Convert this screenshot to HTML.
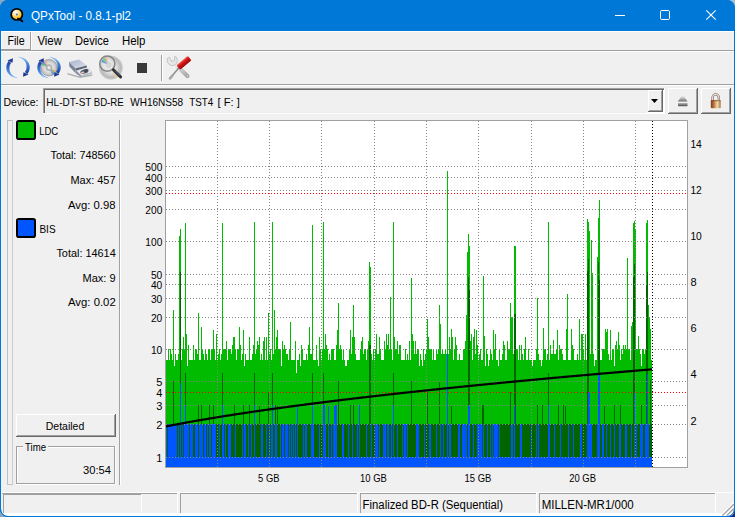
<!DOCTYPE html>
<html><head><meta charset="utf-8"><title>QPxTool - 0.8.1-pl2</title>
<style>html,body{margin:0;padding:0;background:#9DB8D2;overflow:hidden}svg{display:block}</style></head>
<body>
<svg width="735" height="517" viewBox="0 0 735 517" font-family='"Liberation Sans", sans-serif' shape-rendering="crispEdges">
<defs>
<linearGradient id="gArr" gradientUnits="userSpaceOnUse" x1="0" y1="-6" x2="0" y2="11"><stop offset="0" stop-color="#1F3F9E"/><stop offset="0.3" stop-color="#2E62C4"/><stop offset="0.65" stop-color="#4E90E2"/><stop offset="1" stop-color="#9CCCF6"/></linearGradient>
<linearGradient id="gArrow" x1="0" y1="0" x2="0" y2="1"><stop offset="0" stop-color="#9CC8F0"/><stop offset="1" stop-color="#1A3C9C"/></linearGradient>
<linearGradient id="gArrow2" x1="0" y1="1" x2="0" y2="0"><stop offset="0" stop-color="#A8D0F4"/><stop offset="1" stop-color="#1E44A4"/></linearGradient>
<radialGradient id="gDisc" cx="0.5" cy="0.5" r="0.5"><stop offset="0" stop-color="#F4F4F4"/><stop offset="0.5" stop-color="#E2E2E2"/><stop offset="0.85" stop-color="#C4C4C4"/><stop offset="1" stop-color="#ACACAC"/></radialGradient>
<radialGradient id="gGold" cx="0.36" cy="0.28" r="0.75"><stop offset="0" stop-color="#FFFFFF"/><stop offset="0.3" stop-color="#FFE6B8"/><stop offset="0.75" stop-color="#FFC420"/><stop offset="1" stop-color="#F0A000"/></radialGradient>
<linearGradient id="gDrive" x1="0" y1="0" x2="1" y2="1"><stop offset="0" stop-color="#C8CCD4"/><stop offset="1" stop-color="#70747C"/></linearGradient>
<linearGradient id="gRed" x1="0" y1="0" x2="0" y2="1"><stop offset="0" stop-color="#F26060"/><stop offset="0.35" stop-color="#D81818"/><stop offset="1" stop-color="#980808"/></linearGradient>
<linearGradient id="gDrvTop" x1="0" y1="0" x2="1" y2="1"><stop offset="0" stop-color="#A8B4CC"/><stop offset="1" stop-color="#DCE0EA"/></linearGradient>
<radialGradient id="gDisc2" cx="0.5" cy="0.5" r="0.5"><stop offset="0" stop-color="#FAFAFA"/><stop offset="0.5" stop-color="#DEDEDE"/><stop offset="0.85" stop-color="#B8B8B8"/><stop offset="1" stop-color="#D4D4D4"/></radialGradient>
<radialGradient id="gLens" cx="0.55" cy="0.6" r="0.6"><stop offset="0" stop-color="#F4F4F4"/><stop offset="0.6" stop-color="#E0E0E2"/><stop offset="1" stop-color="#C4C4C8"/></radialGradient>
<linearGradient id="gSteel" x1="0" y1="0" x2="1" y2="1"><stop offset="0" stop-color="#F2F2F2"/><stop offset="1" stop-color="#A4A4A4"/></linearGradient>
<linearGradient id="gLock" x1="0" y1="0" x2="1" y2="0"><stop offset="0" stop-color="#80381A"/><stop offset="0.28" stop-color="#B46C3A"/><stop offset="0.66" stop-color="#F0DCAC"/><stop offset="1" stop-color="#A87444"/></linearGradient>
<linearGradient id="gEj" x1="0" y1="0" x2="0" y2="1"><stop offset="0" stop-color="#FFFFFF"/><stop offset="0.45" stop-color="#C8C8C8"/><stop offset="1" stop-color="#6C6C6C"/></linearGradient>
<linearGradient id="gEj2" x1="0" y1="0" x2="0" y2="1"><stop offset="0" stop-color="#B8B8B8"/><stop offset="1" stop-color="#484848"/></linearGradient>
<clipPath id="client"><path d="M1 31H734V509Q734 516 727 516H8Q1 516 1 509Z"/></clipPath>
<clipPath id="win"><rect x="0" y="0" width="735" height="517" rx="8" ry="8"/></clipPath>
</defs>
<rect x="0" y="0" width="735" height="517" fill="#9DB8D2"/>
<rect x="0" y="0" width="12" height="12" fill="#86A9C6"/>
<rect x="723" y="0" width="12" height="12" fill="#A3BFD6"/>
<rect x="0" y="505" width="12" height="12" fill="#8AA5BF"/>
<rect x="723" y="505" width="12" height="12" fill="#0A2CA0"/>
<g clip-path="url(#win)" shape-rendering="auto"><rect x="0" y="0" width="735" height="517" fill="#0078D7"/></g>
<path d="M1 31H734V509Q734 516 727 516H8Q1 516 1 509Z" fill="#F0F0F0" shape-rendering="auto"/>
<g shape-rendering="auto">
<circle cx="16.8" cy="14.4" r="5.6" fill="url(#gGold)" stroke="#000" stroke-width="1.7"/>
<circle cx="16.8" cy="14.4" r="1" fill="#3A7AC0"/>
<path d="M17.2 18.4L20 19.4L22.9 21.7" stroke="#000" stroke-width="2" fill="none"/>
<text x="31" y="20.4" font-size="12" text-anchor="start" fill="#fff" textLength="100.0" lengthAdjust="spacingAndGlyphs">QPxTool - 0.8.1-pl2</text>
<path d="M615 15.5H625" stroke="#fff" stroke-width="1"/>
<rect x="660.5" y="10.5" width="9" height="9" rx="1.3" fill="none" stroke="#fff" stroke-width="1"/>
<path d="M706.3 10.3L715.7 19.7M715.7 10.3L706.3 19.7" stroke="#fff" stroke-width="1.1"/>
</g>
<rect x="1" y="50" width="733" height="1" fill="#A0A0A0"/>
<rect x="1" y="51" width="733" height="1" fill="#FFFFFF"/>
<rect x="1" y="31" width="733" height="1" fill="#FFFFFF"/>
<rect x="1" y="31" width="1" height="19" fill="#FFFFFF"/>
<rect x="30" y="32" width="1" height="18" fill="#A0A0A0"/>
<rect x="31" y="32" width="1" height="18" fill="#FFFFFF"/>
<rect x="1" y="49" width="30" height="1" fill="#A0A0A0"/>
<g shape-rendering="auto">
<text x="7.4" y="45" font-size="12" text-anchor="start" fill="#000" textLength="17.2" lengthAdjust="spacingAndGlyphs">File</text>
<text x="37.4" y="45" font-size="12" text-anchor="start" fill="#000" textLength="24.6" lengthAdjust="spacingAndGlyphs">View</text>
<text x="75.1" y="45" font-size="12" text-anchor="start" fill="#000" textLength="33.7" lengthAdjust="spacingAndGlyphs">Device</text>
<text x="121.9" y="45" font-size="12" text-anchor="start" fill="#000" textLength="23.5" lengthAdjust="spacingAndGlyphs">Help</text>
</g>
<rect x="1" y="84" width="733" height="1" fill="#A0A0A0"/>
<rect x="1" y="85" width="733" height="1" fill="#FFFFFF"/>
<rect x="161" y="55" width="1" height="26" fill="#A0A0A0"/>
<rect x="162" y="55" width="1" height="26" fill="#FFFFFF"/>
<rect x="137" y="63" width="10" height="10" fill="#3A3A3A"/>
<g shape-rendering="auto">
<g transform="translate(18,67.5) rotate(0)">
<path d="M-9.34 -6.44L-9.94 -5.65L-10.45 -4.82L-10.88 -3.94L-11.22 -3.04L-11.47 -2.11L-11.63 -1.16L-11.70 -0.21L-11.67 0.75L-11.55 1.70L-11.34 2.63L-11.04 3.55L-10.65 4.44L-10.17 5.29L-9.61 6.10L-8.98 6.86L-8.27 7.57L-7.50 8.21L-6.67 8.79L-5.78 9.30L-4.85 9.74L-3.88 10.09L-2.88 10.37L-1.86 10.56L-0.82 10.67L-0.77 10.08L-1.73 9.81L-2.65 9.47L-3.52 9.06L-4.33 8.58L-5.08 8.06L-5.76 7.48L-6.37 6.86L-6.91 6.20L-7.37 5.51L-7.75 4.81L-8.06 4.09L-8.28 3.36L-8.43 2.63L-8.50 1.91L-8.49 1.21L-8.48 0.52L-8.50 -0.15L-8.45 -0.82L-8.33 -1.48L-8.15 -2.13L-7.90 -2.76L-7.59 -3.38L-7.22 -3.96L-6.79 -4.51Z" fill="url(#gArr)"/><path d="M-5.1 -9.3L-10.5 -6.9L-5.4 -4.8Z" fill="#1B3796"/>
</g>
<g transform="translate(18,67.5) rotate(180)">
<path d="M-9.34 -6.44L-9.94 -5.65L-10.45 -4.82L-10.88 -3.94L-11.22 -3.04L-11.47 -2.11L-11.63 -1.16L-11.70 -0.21L-11.67 0.75L-11.55 1.70L-11.34 2.63L-11.04 3.55L-10.65 4.44L-10.17 5.29L-9.61 6.10L-8.98 6.86L-8.27 7.57L-7.50 8.21L-6.67 8.79L-5.78 9.30L-4.85 9.74L-3.88 10.09L-2.88 10.37L-1.86 10.56L-0.82 10.67L-0.77 10.08L-1.73 9.81L-2.65 9.47L-3.52 9.06L-4.33 8.58L-5.08 8.06L-5.76 7.48L-6.37 6.86L-6.91 6.20L-7.37 5.51L-7.75 4.81L-8.06 4.09L-8.28 3.36L-8.43 2.63L-8.50 1.91L-8.49 1.21L-8.48 0.52L-8.50 -0.15L-8.45 -0.82L-8.33 -1.48L-8.15 -2.13L-7.90 -2.76L-7.59 -3.38L-7.22 -3.96L-6.79 -4.51Z" fill="url(#gArr)"/><path d="M-5.1 -9.3L-10.5 -6.9L-5.4 -4.8Z" fill="#1B3796"/>
</g>
<circle cx="49" cy="67.7" r="8.3" fill="url(#gDisc)" stroke="#8C8C8C" stroke-width="0.6"/>
<path d="M46.40 66.65L41.58 64.70A8 8 0 0 1 42.53 63.00L46.73 66.05Z" fill="#58B858" opacity="0.85"/>
<path d="M46.73 66.05L42.53 63.00A8 8 0 0 1 43.86 61.57L47.20 65.56Z" fill="#5888E8" opacity="0.85"/>
<path d="M47.20 65.56L43.86 61.57A8 8 0 0 1 45.75 60.39L47.86 65.14Z" fill="#F0A890" opacity="0.85"/>
<path d="M51.60 68.75L56.42 70.70A8 8 0 0 1 55.47 72.40L51.27 69.35Z" fill="#F0A870" opacity="0.85"/>
<path d="M51.27 69.35L55.47 72.40A8 8 0 0 1 54.14 73.83L50.80 69.84Z" fill="#58B858" opacity="0.8"/>
<path d="M50.80 69.84L54.14 73.83A8 8 0 0 1 52.25 75.01L50.14 70.26Z" fill="#5888E8" opacity="0.8"/>
<circle cx="49" cy="67.7" r="3.1" fill="#BEBEBE" stroke="#989898" stroke-width="0.5"/><circle cx="49" cy="67.7" r="1.4" fill="#EDEDED"/>
<g transform="translate(49,67.5) rotate(0)">
<path d="M-9.34 -6.44L-9.94 -5.65L-10.45 -4.82L-10.88 -3.94L-11.22 -3.04L-11.47 -2.11L-11.63 -1.16L-11.70 -0.21L-11.67 0.75L-11.55 1.70L-11.34 2.63L-11.04 3.55L-10.65 4.44L-10.17 5.29L-9.61 6.10L-8.98 6.86L-8.27 7.57L-7.50 8.21L-6.67 8.79L-5.78 9.30L-4.85 9.74L-3.88 10.09L-2.88 10.37L-1.86 10.56L-0.82 10.67L-0.77 10.08L-1.73 9.81L-2.65 9.47L-3.52 9.06L-4.33 8.58L-5.08 8.06L-5.76 7.48L-6.37 6.86L-6.91 6.20L-7.37 5.51L-7.75 4.81L-8.06 4.09L-8.28 3.36L-8.43 2.63L-8.50 1.91L-8.49 1.21L-8.48 0.52L-8.50 -0.15L-8.45 -0.82L-8.33 -1.48L-8.15 -2.13L-7.90 -2.76L-7.59 -3.38L-7.22 -3.96L-6.79 -4.51Z" fill="url(#gArr)"/><path d="M-5.1 -9.3L-10.5 -6.9L-5.4 -4.8Z" fill="#1B3796"/>
</g>
<g transform="translate(49,67.5) rotate(180)">
<path d="M-9.34 -6.44L-9.94 -5.65L-10.45 -4.82L-10.88 -3.94L-11.22 -3.04L-11.47 -2.11L-11.63 -1.16L-11.70 -0.21L-11.67 0.75L-11.55 1.70L-11.34 2.63L-11.04 3.55L-10.65 4.44L-10.17 5.29L-9.61 6.10L-8.98 6.86L-8.27 7.57L-7.50 8.21L-6.67 8.79L-5.78 9.30L-4.85 9.74L-3.88 10.09L-2.88 10.37L-1.86 10.56L-0.82 10.67L-0.77 10.08L-1.73 9.81L-2.65 9.47L-3.52 9.06L-4.33 8.58L-5.08 8.06L-5.76 7.48L-6.37 6.86L-6.91 6.20L-7.37 5.51L-7.75 4.81L-8.06 4.09L-8.28 3.36L-8.43 2.63L-8.50 1.91L-8.49 1.21L-8.48 0.52L-8.50 -0.15L-8.45 -0.82L-8.33 -1.48L-8.15 -2.13L-7.90 -2.76L-7.59 -3.38L-7.22 -3.96L-6.79 -4.51Z" fill="url(#gArr)"/><path d="M-5.1 -9.3L-10.5 -6.9L-5.4 -4.8Z" fill="#1B3796"/>
</g>
<path d="M67.5 73L80 76.4L92.4 74.2L92.4 75.7L80 77.9L67.5 74.5Z" fill="#B0B0B0"/>
<path d="M69 62L79 59.6L86.7 65.5L75.5 68.6Z" fill="url(#gDrvTop)"/>
<path d="M69 62L75.5 68.6L75.6 73.2L69.4 66.4Z" fill="#7C849C"/>
<path d="M75.5 68.6L86.7 65.5L87 67.4L75.6 70.7Z" fill="#5C6478"/>
<path d="M76.4 70.7L87.2 67.6L91.9 72.3L81.3 75.7Z" fill="#F2F2F4" stroke="#A4A8B0" stroke-width="0.5"/>
<path d="M75.6 70.7L76.4 70.7L81.3 75.7L81.3 77.2L75.6 73.2Z" fill="#8890A4"/>
<path d="M81.3 75.7L91.9 72.3L91.9 73.6L81.3 77.2Z" fill="#B4B8C0"/>
<ellipse cx="84.4" cy="71.5" rx="4.3" ry="2.2" transform="rotate(-17 84.4 71.5)" fill="#565E72"/>
<ellipse cx="86" cy="70.6" rx="1.8" ry="1.3" transform="rotate(-17 86 70.6)" fill="#3C4454"/>
<ellipse cx="82.6" cy="72.6" rx="1.9" ry="0.8" transform="rotate(-17 82.6 72.6)" fill="#F0C0B0"/>
<circle cx="110.9" cy="67.7" r="11.6" fill="url(#gDisc2)" stroke="#B8B8B8" stroke-width="0.5"/>
<circle cx="110.9" cy="67.7" r="3.4" fill="none" stroke="#C8C8C8" stroke-width="0.8"/>
<path d="M110.9 67.7L115.5 78.3A11.6 11.6 0 0 0 118.6 76.4Z" fill="#E8C898" opacity="0.8"/>
<circle cx="107.3" cy="63.7" r="7.6" fill="url(#gLens)" stroke="#848484" stroke-width="1.5"/>
<path d="M108.3 64.7L101.4 62A6.9 6.9 0 0 1 102.6 59.6Z" fill="#6090E8" opacity="0.9"/><path d="M108.3 64.7L102.6 59.6A6.9 6.9 0 0 1 104.8 57.9Z" fill="#70C870" opacity="0.9"/><path d="M108.3 64.7L104.8 57.9A6.9 6.9 0 0 1 107 57.2Z" fill="#F0B090" opacity="0.85"/>
<circle cx="108.6" cy="65" r="2.5" fill="#D8D8DA" stroke="#C0C0C0" stroke-width="0.4"/>
<path d="M113.4 69.7L120.6 76.9" stroke="#2C2C2C" stroke-width="2.9" stroke-linecap="round"/>
<path d="M115.2 70.8L119.8 75.4" stroke="#5878D0" stroke-width="0.9" stroke-linecap="round"/>
<path d="M174.5 63.5L187.4 76" stroke="url(#gSteel)" stroke-width="4.2" stroke-linecap="round"/>
<path d="M167.6 58.2A5.2 5.2 0 1 0 176.2 57L174.6 56.4L174.4 60.6L171.6 61.6L169.6 57.2Z" fill="#E6E6E6" stroke="#A0A0A0" stroke-width="0.5"/>
<circle cx="187.2" cy="76" r="1.2" fill="#F0F0F0" stroke="#8C8C8C" stroke-width="0.7"/>
<path d="M179.3 67.3L171.8 76.2" stroke="#8C8C8C" stroke-width="1.5"/>
<path d="M172.6 75.4L170 78.4" stroke="#A8A8A8" stroke-width="2.6" stroke-linecap="round"/>
<g transform="rotate(-39.5 184 62.8)"><rect x="176.6" y="59.9" width="14.8" height="5.8" rx="1.2" fill="url(#gRed)"/></g>
</g>
<g shape-rendering="auto">
<text x="3.5" y="106" font-size="11" text-anchor="start" fill="#000" textLength="35.0" lengthAdjust="spacingAndGlyphs">Device:</text>
</g>
<rect x="43" y="88" width="622" height="1" fill="#A0A0A0"/>
<rect x="43" y="88" width="1" height="26" fill="#A0A0A0"/>
<rect x="44" y="89" width="620" height="1" fill="#696969"/>
<rect x="44" y="89" width="1" height="24" fill="#696969"/>
<rect x="43" y="113" width="622" height="1" fill="#FFFFFF"/>
<rect x="664" y="88" width="1" height="26" fill="#FFFFFF"/>
<rect x="45" y="112" width="602" height="1" fill="#ECECEC"/>
<rect x="647" y="112" width="17" height="1" fill="#FFFFFF"/>
<rect x="663" y="90" width="1" height="23" fill="#FFFFFF"/>
<rect x="648" y="90" width="15" height="1" fill="#FFFFFF"/>
<rect x="648" y="90" width="1" height="22" fill="#FFFFFF"/>
<rect x="648" y="111" width="15" height="1" fill="#696969"/>
<rect x="662" y="90" width="1" height="22" fill="#696969"/>
<rect x="649" y="110" width="13" height="1" fill="#A0A0A0"/>
<rect x="661" y="91" width="1" height="20" fill="#A0A0A0"/>
<path d="M651 99H658L654.5 103Z" fill="#000" shape-rendering="auto"/>
<g shape-rendering="auto">
<text y="106" font-size="11" fill="#000"><tspan x="46.3" textLength="45" lengthAdjust="spacingAndGlyphs">HL-DT-ST</tspan> <tspan x="93.7" textLength="30.1" lengthAdjust="spacingAndGlyphs">BD-RE</tspan> <tspan x="130.2" textLength="53" lengthAdjust="spacingAndGlyphs">WH16NS58</tspan> <tspan x="189.2" textLength="24.1" lengthAdjust="spacingAndGlyphs">TST4</tspan> <tspan x="217.5" textLength="22.3" lengthAdjust="spacingAndGlyphs">[ F: ]</tspan></text>
</g>
<rect x="668" y="88" width="30" height="1" fill="#FFFFFF"/>
<rect x="668" y="88" width="1" height="26" fill="#FFFFFF"/>
<rect x="668" y="113" width="30" height="1" fill="#696969"/>
<rect x="697" y="88" width="1" height="26" fill="#696969"/>
<rect x="669" y="112" width="28" height="1" fill="#A0A0A0"/>
<rect x="696" y="89" width="1" height="24" fill="#A0A0A0"/>
<rect x="701" y="88" width="30" height="1" fill="#FFFFFF"/>
<rect x="701" y="88" width="1" height="26" fill="#FFFFFF"/>
<rect x="701" y="113" width="30" height="1" fill="#696969"/>
<rect x="730" y="88" width="1" height="26" fill="#696969"/>
<rect x="702" y="112" width="28" height="1" fill="#A0A0A0"/>
<rect x="729" y="89" width="1" height="24" fill="#A0A0A0"/>
<g shape-rendering="auto">
<path d="M677.8 101.6L682.7 94.6L687.6 101.6Z" fill="url(#gEj)"/><rect x="678" y="103" width="9.5" height="3.2" fill="url(#gEj2)"/>
<path d="M712.6 100.5V97.8A3.1 3.5 0 0 1 718.8 97.8V100.5" fill="none" stroke="#7C6458" stroke-width="2.3"/>
<path d="M712.6 100.5V97.8A3.1 3.5 0 0 1 718.8 97.8V100.5" fill="none" stroke="#E2DCD8" stroke-width="1.2"/>
<rect x="710.8" y="100" width="9.9" height="8.2" rx="1" fill="url(#gLock)"/>
<rect x="710.8" y="100" width="9.9" height="1.2" rx="0.5" fill="#7A4428" opacity="0.55"/>
</g>
<rect x="7" y="120" width="1" height="365" fill="#C0C0C0"/>
<rect x="7" y="120" width="6" height="1" fill="#C0C0C0"/>
<rect x="12" y="120" width="1" height="365" fill="#CCCCCC"/>
<rect x="7" y="484" width="6" height="1" fill="#C4C4C4"/>
<rect x="119" y="120" width="1" height="365" fill="#A0A0A0"/>
<rect x="120" y="120" width="1" height="365" fill="#FFFFFF"/>
<g shape-rendering="auto">
<rect x="17" y="121" width="18" height="18" rx="1.8" fill="#00BB00" stroke="#000" stroke-width="2"/>
<rect x="17" y="219" width="18" height="18" rx="1.8" fill="#0055FF" stroke="#000" stroke-width="2"/>
<text x="39.2" y="135" font-size="11" text-anchor="start" fill="#000" textLength="19.0" lengthAdjust="spacingAndGlyphs">LDC</text>
<text x="39.4" y="233" font-size="11" text-anchor="start" fill="#000" textLength="16.2" lengthAdjust="spacingAndGlyphs">BIS</text>
<text x="115.5" y="159" font-size="11" text-anchor="end" fill="#000" textLength="65.0" lengthAdjust="spacingAndGlyphs">Total: 748560</text>
<text x="115.5" y="183.6" font-size="11" text-anchor="end" fill="#000" textLength="45.0" lengthAdjust="spacingAndGlyphs">Max: 457</text>
<text x="115.5" y="208.8" font-size="11" text-anchor="end" fill="#000" textLength="47.5" lengthAdjust="spacingAndGlyphs">Avg: 0.98</text>
<text x="115.7" y="256.8" font-size="11" text-anchor="end" fill="#000" textLength="59.3" lengthAdjust="spacingAndGlyphs">Total: 14614</text>
<text x="115.5" y="281.6" font-size="11" text-anchor="end" fill="#000" textLength="33.0" lengthAdjust="spacingAndGlyphs">Max: 9</text>
<text x="115.7" y="306.2" font-size="11" text-anchor="end" fill="#000" textLength="47.7" lengthAdjust="spacingAndGlyphs">Avg: 0.02</text>
</g>
<rect x="16" y="414" width="100" height="1" fill="#FFFFFF"/>
<rect x="16" y="414" width="1" height="23" fill="#FFFFFF"/>
<rect x="16" y="436" width="100" height="1" fill="#696969"/>
<rect x="115" y="414" width="1" height="23" fill="#696969"/>
<rect x="17" y="435" width="98" height="1" fill="#A0A0A0"/>
<rect x="114" y="415" width="1" height="21" fill="#A0A0A0"/>
<g shape-rendering="auto">
<text x="65" y="430" font-size="11" text-anchor="middle" fill="#000" textLength="38.5" lengthAdjust="spacingAndGlyphs">Detailed</text>
</g>
<rect x="16" y="446" width="99" height="1" fill="#A0A0A0"/>
<rect x="16" y="446" width="1" height="38" fill="#A0A0A0"/>
<rect x="16" y="483" width="99" height="1" fill="#A0A0A0"/>
<rect x="114" y="446" width="1" height="38" fill="#A0A0A0"/>
<rect x="17" y="447" width="97" height="1" fill="#FFFFFF"/>
<rect x="17" y="447" width="1" height="36" fill="#FFFFFF"/>
<rect x="16" y="484" width="100" height="1" fill="#FFFFFF"/>
<rect x="115" y="446" width="1" height="39" fill="#FFFFFF"/>
<rect x="23" y="444" width="25" height="6" fill="#F0F0F0"/>
<g shape-rendering="auto">
<text x="25" y="450.8" font-size="11" text-anchor="start" fill="#000" textLength="21.0" lengthAdjust="spacingAndGlyphs">Time</text>
<text x="111" y="473.8" font-size="11" text-anchor="end" fill="#000" textLength="28.0" lengthAdjust="spacingAndGlyphs">30:54</text>
</g>
<rect x="165" y="120" width="523" height="348" fill="#A0A0A0"/>
<rect x="166" y="121" width="521" height="346" fill="#FFFFFF"/>
<path d="M166.5 360V467M167.5 360V467M168.5 349V467M169.5 360V467M170.5 349V467M171.5 354V467M172.5 360V467M173.5 310V467M174.5 366V467M175.5 354V467M176.5 360V467M177.5 360V467M178.5 354V467M179.5 236V467M180.5 229V467M181.5 360V467M182.5 349V467M183.5 337V467M184.5 349V467M185.5 223V467M186.5 334V467M187.5 366V467M188.5 345V467M189.5 360V467M190.5 360V467M191.5 360V467M192.5 360V467M193.5 345V467M194.5 360V467M195.5 349V467M196.5 349V467M197.5 354V467M198.5 313V467M199.5 360V467M200.5 360V467M201.5 327V467M202.5 349V467M203.5 354V467M204.5 360V467M205.5 349V467M206.5 354V467M207.5 360V467M208.5 349V467M209.5 349V467M210.5 360V467M211.5 349V467M212.5 349V467M213.5 330V467M214.5 349V467M215.5 360V467M216.5 334V467M217.5 360V467M218.5 354V467M219.5 349V467M220.5 360V467M221.5 354V467M222.5 223V467M223.5 349V467M224.5 349V467M225.5 349V467M226.5 341V467M227.5 360V467M228.5 349V467M229.5 349V467M230.5 349V467M231.5 354V467M232.5 345V467M233.5 337V467M234.5 337V467M235.5 349V467M236.5 360V467M237.5 349V467M238.5 349V467M239.5 327V467M240.5 345V467M241.5 360V467M242.5 354V467M243.5 330V467M244.5 366V467M245.5 354V467M246.5 360V467M247.5 360V467M248.5 360V467M249.5 337V467M250.5 360V467M251.5 360V467M252.5 354V467M253.5 345V467M254.5 222V467M255.5 354V467M256.5 349V467M257.5 341V467M258.5 345V467M259.5 337V467M260.5 360V467M261.5 354V467M262.5 360V467M263.5 341V467M264.5 337V467M265.5 360V467M266.5 337V467M267.5 360V467M268.5 313V467M269.5 354V467M270.5 349V467M271.5 360V467M272.5 222V467M273.5 354V467M274.5 310V467M275.5 349V467M276.5 337V467M277.5 330V467M278.5 349V467M279.5 349V467M280.5 349V467M281.5 366V467M282.5 341V467M283.5 349V467M284.5 345V467M285.5 349V467M286.5 354V467M287.5 354V467M288.5 360V467M289.5 349V467M290.5 322V467M291.5 360V467M292.5 360V467M293.5 360V467M294.5 360V467M295.5 341V467M296.5 373V467M297.5 360V467M298.5 360V467M299.5 354V467M300.5 366V467M301.5 345V467M302.5 349V467M303.5 360V467M304.5 360V467M305.5 360V467M306.5 354V467M307.5 360V467M308.5 345V467M309.5 327V467M310.5 354V467M311.5 354V467M312.5 225V467M313.5 360V467M314.5 360V467M315.5 360V467M316.5 345V467M317.5 360V467M318.5 366V467M319.5 337V467M320.5 349V467M321.5 360V467M322.5 349V467M323.5 222V467M324.5 349V467M325.5 334V467M326.5 345V467M327.5 349V467M328.5 360V467M329.5 354V467M330.5 360V467M331.5 349V467M332.5 349V467M333.5 349V467M334.5 360V467M335.5 360V467M336.5 345V467M337.5 330V467M338.5 303V467M339.5 349V467M340.5 345V467M341.5 349V467M342.5 360V467M343.5 349V467M344.5 360V467M345.5 366V467M346.5 366V467M347.5 360V467M348.5 360V467M349.5 349V467M350.5 330V467M351.5 354V467M352.5 337V467M353.5 305V467M354.5 337V467M355.5 354V467M356.5 360V467M357.5 360V467M358.5 360V467M359.5 360V467M360.5 349V467M361.5 341V467M362.5 337V467M363.5 354V467M364.5 349V467M365.5 349V467M366.5 360V467M367.5 349V467M368.5 341V467M369.5 262V467M370.5 267V467M371.5 354V467M372.5 360V467M373.5 349V467M374.5 360V467M375.5 349V467M376.5 334V467M377.5 354V467M378.5 354V467M379.5 337V467M380.5 349V467M381.5 360V467M382.5 360V467M383.5 360V467M384.5 341V467M385.5 349V467M386.5 334V467M387.5 345V467M388.5 334V467M389.5 349V467M390.5 297V467M391.5 349V467M392.5 360V467M393.5 222V467M394.5 337V467M395.5 349V467M396.5 349V467M397.5 341V467M398.5 354V467M399.5 345V467M400.5 345V467M401.5 360V467M402.5 360V467M403.5 360V467M404.5 360V467M405.5 349V467M406.5 360V467M407.5 354V467M408.5 360V467M409.5 341V467M410.5 360V467M411.5 278V467M412.5 334V467M413.5 341V467M414.5 354V467M415.5 341V467M416.5 354V467M417.5 349V467M418.5 349V467M419.5 366V467M420.5 354V467M421.5 360V467M422.5 366V467M423.5 349V467M424.5 360V467M425.5 354V467M426.5 349V467M427.5 319V467M428.5 337V467M429.5 349V467M430.5 349V467M431.5 349V467M432.5 360V467M433.5 349V467M434.5 360V467M435.5 360V467M436.5 349V467M437.5 354V467M438.5 349V467M439.5 305V467M440.5 324V467M441.5 354V467M442.5 349V467M443.5 354V467M444.5 354V467M445.5 349V467M446.5 354V467M447.5 171V467M448.5 354V467M449.5 337V467M450.5 349V467M451.5 329V467M452.5 337V467M453.5 360V467M454.5 349V467M455.5 337V467M456.5 345V467M457.5 360V467M458.5 360V467M459.5 354V467M460.5 360V467M461.5 360V467M462.5 360V467M463.5 349V467M464.5 349V467M465.5 341V467M466.5 315V467M467.5 252V467M468.5 234V467M469.5 246V467M470.5 341V467M471.5 334V467M472.5 360V467M473.5 337V467M474.5 329V467M475.5 354V467M476.5 330V467M477.5 345V467M478.5 360V467M479.5 354V467M480.5 349V467M481.5 360V467M482.5 360V467M483.5 276V467M484.5 336V467M485.5 366V467M486.5 349V467M487.5 354V467M488.5 366V467M489.5 360V467M490.5 349V467M491.5 354V467M492.5 360V467M493.5 330V467M494.5 349V467M495.5 334V467M496.5 360V467M497.5 360V467M498.5 366V467M499.5 349V467M500.5 360V467M501.5 360V467M502.5 354V467M503.5 341V467M504.5 345V467M505.5 360V467M506.5 360V467M507.5 341V467M508.5 349V467M509.5 349V467M510.5 303V467M511.5 317V467M512.5 317V467M513.5 354V467M514.5 246V467M515.5 246V467M516.5 349V467M517.5 349V467M518.5 360V467M519.5 345V467M520.5 360V467M521.5 345V467M522.5 354V467M523.5 360V467M524.5 349V467M525.5 337V467M526.5 360V467M527.5 360V467M528.5 349V467M529.5 360V467M530.5 360V467M531.5 360V467M532.5 366V467M533.5 360V467M534.5 360V467M535.5 360V467M536.5 349V467M537.5 298V467M538.5 354V467M539.5 360V467M540.5 360V467M541.5 366V467M542.5 360V467M543.5 328V467M544.5 349V467M545.5 349V467M546.5 360V467M547.5 354V467M548.5 222V467M549.5 360V467M550.5 345V467M551.5 354V467M552.5 354V467M553.5 340V467M554.5 354V467M555.5 354V467M556.5 349V467M557.5 330V467M558.5 360V467M559.5 345V467M560.5 349V467M561.5 349V467M562.5 354V467M563.5 360V467M564.5 360V467M565.5 360V467M566.5 329V467M567.5 294V467M568.5 360V467M569.5 360V467M570.5 360V467M571.5 329V467M572.5 345V467M573.5 349V467M574.5 360V467M575.5 360V467M576.5 360V467M577.5 354V467M578.5 360V467M579.5 319V467M580.5 360V467M581.5 334V467M582.5 334V467M583.5 349V467M584.5 360V467M585.5 334V467M586.5 360V467M587.5 219V467M588.5 222V467M589.5 231V467M590.5 354V467M591.5 240V467M592.5 273V467M593.5 354V467M594.5 366V467M595.5 360V467M596.5 360V467M597.5 257V467M598.5 218V467M599.5 200V467M600.5 360V467M601.5 360V467M602.5 349V467M603.5 349V467M604.5 349V467M605.5 329V467M606.5 332V467M607.5 329V467M608.5 354V467M609.5 360V467M610.5 330V467M611.5 360V467M612.5 349V467M613.5 349V467M614.5 366V467M615.5 345V467M616.5 341V467M617.5 349V467M618.5 332V467M619.5 345V467M620.5 360V467M621.5 349V467M622.5 354V467M623.5 345V467M624.5 349V467M625.5 345V467M626.5 349V467M627.5 258V467M628.5 349V467M629.5 349V467M630.5 360V467M631.5 326V467M632.5 322V467M633.5 223V467M634.5 221V467M635.5 230V467M636.5 349V467M637.5 349V467M638.5 336V467M639.5 349V467M640.5 354V467M641.5 366V467M642.5 349V467M643.5 349V467M644.5 354V467M645.5 349V467M646.5 223V467M647.5 220V467M648.5 305V467M649.5 318V467M650.5 329V467M651.5 360V467" stroke="#00BB00" stroke-width="1" fill="none"/>
<path d="M166.5 424V467M167.5 424V467M168.5 424V467M169.5 424V467M170.5 424V467M171.5 424V467M172.5 424V467M173.5 381V467M174.5 424V467M175.5 424V467M176.5 424V467M177.5 424V467M178.5 424V467M179.5 424V467M180.5 272V467M181.5 424V467M182.5 424V467M183.5 424V467M184.5 424V467M185.5 373V467M186.5 424V467M187.5 424V467M188.5 424V467M189.5 424V467M190.5 424V467M191.5 424V467M192.5 424V467M193.5 424V467M194.5 424V467M195.5 424V467M196.5 424V467M197.5 424V467M198.5 405V467M199.5 424V467M200.5 424V467M201.5 405V467M202.5 424V467M203.5 424V467M204.5 424V467M205.5 424V467M206.5 424V467M207.5 424V467M208.5 424V467M209.5 405V467M210.5 424V467M211.5 424V467M212.5 424V467M213.5 405V467M214.5 424V467M215.5 424V467M216.5 424V467M217.5 424V467M218.5 424V467M219.5 424V467M220.5 424V467M221.5 424V467M222.5 373V467M223.5 424V467M224.5 424V467M225.5 424V467M226.5 424V467M227.5 424V467M228.5 424V467M229.5 424V467M230.5 424V467M231.5 424V467M232.5 424V467M233.5 424V467M234.5 405V467M235.5 424V467M236.5 424V467M237.5 424V467M238.5 424V467M239.5 424V467M240.5 424V467M241.5 424V467M242.5 424V467M243.5 405V467M244.5 424V467M245.5 424V467M246.5 424V467M247.5 424V467M248.5 424V467M249.5 405V467M250.5 424V467M251.5 424V467M252.5 424V467M253.5 424V467M254.5 373V467M255.5 424V467M256.5 424V467M257.5 424V467M258.5 424V467M259.5 405V467M260.5 424V467M261.5 424V467M262.5 424V467M263.5 424V467M264.5 424V467M265.5 424V467M266.5 424V467M267.5 424V467M268.5 392V467M269.5 424V467M270.5 424V467M271.5 424V467M272.5 373V467M273.5 424V467M274.5 424V467M275.5 405V467M276.5 424V467M277.5 405V467M278.5 424V467M279.5 424V467M280.5 424V467M281.5 424V467M282.5 424V467M283.5 424V467M284.5 424V467M285.5 424V467M286.5 424V467M287.5 424V467M288.5 424V467M289.5 424V467M290.5 424V467M291.5 424V467M292.5 424V467M293.5 424V467M294.5 424V467M295.5 424V467M296.5 424V467M297.5 424V467M298.5 424V467M299.5 424V467M300.5 424V467M301.5 424V467M302.5 424V467M303.5 424V467M304.5 424V467M305.5 424V467M306.5 424V467M307.5 424V467M308.5 424V467M309.5 424V467M310.5 424V467M311.5 424V467M312.5 373V467M313.5 424V467M314.5 424V467M315.5 424V467M316.5 424V467M317.5 424V467M318.5 424V467M319.5 424V467M320.5 424V467M321.5 424V467M322.5 424V467M323.5 373V467M324.5 424V467M325.5 424V467M326.5 424V467M327.5 424V467M328.5 424V467M329.5 424V467M330.5 424V467M331.5 424V467M332.5 424V467M333.5 424V467M334.5 424V467M335.5 424V467M336.5 424V467M337.5 424V467M338.5 381V467M339.5 424V467M340.5 424V467M341.5 424V467M342.5 424V467M343.5 424V467M344.5 424V467M345.5 424V467M346.5 424V467M347.5 424V467M348.5 424V467M349.5 424V467M350.5 405V467M351.5 424V467M352.5 424V467M353.5 405V467M354.5 424V467M355.5 424V467M356.5 424V467M357.5 424V467M358.5 424V467M359.5 424V467M360.5 424V467M361.5 424V467M362.5 424V467M363.5 424V467M364.5 424V467M365.5 424V467M366.5 424V467M367.5 424V467M368.5 424V467M369.5 345V467M370.5 345V467M371.5 424V467M372.5 424V467M373.5 424V467M374.5 424V467M375.5 424V467M376.5 424V467M377.5 424V467M378.5 424V467M379.5 424V467M380.5 424V467M381.5 424V467M382.5 424V467M383.5 424V467M384.5 424V467M385.5 424V467M386.5 424V467M387.5 424V467M388.5 424V467M389.5 424V467M390.5 424V467M391.5 424V467M392.5 424V467M393.5 373V467M394.5 424V467M395.5 424V467M396.5 424V467M397.5 424V467M398.5 424V467M399.5 424V467M400.5 424V467M401.5 424V467M402.5 424V467M403.5 424V467M404.5 424V467M405.5 424V467M406.5 424V467M407.5 424V467M408.5 424V467M409.5 424V467M410.5 424V467M411.5 381V467M412.5 424V467M413.5 424V467M414.5 424V467M415.5 424V467M416.5 424V467M417.5 424V467M418.5 424V467M419.5 424V467M420.5 424V467M421.5 424V467M422.5 424V467M423.5 424V467M424.5 424V467M425.5 424V467M426.5 424V467M427.5 392V467M428.5 424V467M429.5 424V467M430.5 424V467M431.5 424V467M432.5 424V467M433.5 424V467M434.5 424V467M435.5 424V467M436.5 424V467M437.5 424V467M438.5 424V467M439.5 381V467M440.5 424V467M441.5 424V467M442.5 424V467M443.5 424V467M444.5 424V467M445.5 424V467M446.5 424V467M447.5 424V467M448.5 424V467M449.5 424V467M450.5 424V467M451.5 405V467M452.5 424V467M453.5 424V467M454.5 424V467M455.5 424V467M456.5 424V467M457.5 424V467M458.5 424V467M459.5 424V467M460.5 424V467M461.5 424V467M462.5 424V467M463.5 424V467M464.5 424V467M465.5 424V467M466.5 424V467M467.5 424V467M468.5 277V467M469.5 290V467M470.5 424V467M471.5 424V467M472.5 424V467M473.5 424V467M474.5 424V467M475.5 424V467M476.5 424V467M477.5 424V467M478.5 424V467M479.5 424V467M480.5 424V467M481.5 424V467M482.5 405V467M483.5 405V467M484.5 424V467M485.5 424V467M486.5 424V467M487.5 424V467M488.5 424V467M489.5 424V467M490.5 424V467M491.5 424V467M492.5 424V467M493.5 424V467M494.5 424V467M495.5 424V467M496.5 424V467M497.5 424V467M498.5 424V467M499.5 424V467M500.5 424V467M501.5 424V467M502.5 424V467M503.5 424V467M504.5 424V467M505.5 424V467M506.5 424V467M507.5 424V467M508.5 424V467M509.5 424V467M510.5 392V467M511.5 424V467M512.5 424V467M513.5 424V467M514.5 314V467M515.5 314V467M516.5 424V467M517.5 424V467M518.5 424V467M519.5 424V467M520.5 424V467M521.5 424V467M522.5 424V467M523.5 424V467M524.5 424V467M525.5 424V467M526.5 424V467M527.5 424V467M528.5 424V467M529.5 424V467M530.5 424V467M531.5 424V467M532.5 424V467M533.5 424V467M534.5 424V467M535.5 424V467M536.5 424V467M537.5 405V467M538.5 424V467M539.5 424V467M540.5 424V467M541.5 424V467M542.5 405V467M543.5 424V467M544.5 424V467M545.5 424V467M546.5 424V467M547.5 424V467M548.5 373V467M549.5 424V467M550.5 424V467M551.5 424V467M552.5 424V467M553.5 424V467M554.5 424V467M555.5 424V467M556.5 424V467M557.5 424V467M558.5 405V467M559.5 424V467M560.5 424V467M561.5 424V467M562.5 424V467M563.5 405V467M564.5 424V467M565.5 405V467M566.5 424V467M567.5 424V467M568.5 424V467M569.5 424V467M570.5 424V467M571.5 424V467M572.5 424V467M573.5 424V467M574.5 424V467M575.5 424V467M576.5 424V467M577.5 424V467M578.5 424V467M579.5 424V467M580.5 424V467M581.5 424V467M582.5 424V467M583.5 424V467M584.5 424V467M585.5 424V467M586.5 424V467M587.5 271V467M588.5 259V467M589.5 424V467M590.5 424V467M591.5 424V467M592.5 424V467M593.5 424V467M594.5 424V467M595.5 424V467M596.5 424V467M597.5 424V467M598.5 262V467M599.5 280V467M600.5 424V467M601.5 424V467M602.5 424V467M603.5 424V467M604.5 405V467M605.5 424V467M606.5 424V467M607.5 424V467M608.5 424V467M609.5 424V467M610.5 424V467M611.5 424V467M612.5 424V467M613.5 424V467M614.5 405V467M615.5 424V467M616.5 424V467M617.5 424V467M618.5 424V467M619.5 424V467M620.5 405V467M621.5 424V467M622.5 424V467M623.5 424V467M624.5 424V467M625.5 424V467M626.5 424V467M627.5 424V467M628.5 424V467M629.5 424V467M630.5 424V467M631.5 424V467M632.5 424V467M633.5 277V467M634.5 264V467M635.5 424V467M636.5 424V467M637.5 424V467M638.5 424V467M639.5 424V467M640.5 424V467M641.5 405V467M642.5 424V467M643.5 424V467M644.5 424V467M645.5 424V467M646.5 285V467M647.5 272V467M648.5 424V467M649.5 424V467M650.5 380V467M651.5 424V467" stroke="#006400" stroke-width="1" fill="none"/>
<path d="M166.5 424V467M167.5 457V467M168.5 424V467M169.5 424V467M170.5 424V467M171.5 424V467M172.5 424V467M173.5 424V467M174.5 424V467M175.5 424V467M176.5 424V467M177.5 457V467M178.5 424V467M179.5 457V467M180.5 383V467M181.5 457V467M182.5 424V467M183.5 457V467M184.5 424V467M185.5 405V467M186.5 424V467M187.5 424V467M188.5 424V467M189.5 457V467M190.5 424V467M191.5 424V467M192.5 424V467M193.5 457V467M194.5 457V467M195.5 424V467M196.5 424V467M197.5 424V467M198.5 457V467M199.5 424V467M200.5 424V467M201.5 424V467M202.5 424V467M203.5 457V467M204.5 424V467M205.5 424V467M206.5 457V467M207.5 424V467M208.5 457V467M209.5 424V467M210.5 424V467M211.5 457V467M212.5 424V467M213.5 424V467M214.5 424V467M215.5 424V467M216.5 457V467M217.5 457V467M218.5 457V467M219.5 424V467M220.5 457V467M221.5 457V467M222.5 405V467M223.5 424V467M224.5 457V467M225.5 424V467M226.5 457V467M227.5 457V467M228.5 424V467M229.5 424V467M230.5 424V467M231.5 457V467M232.5 457V467M233.5 457V467M234.5 457V467M235.5 424V467M236.5 457V467M237.5 457V467M238.5 457V467M239.5 457V467M240.5 457V467M241.5 457V467M242.5 424V467M243.5 457V467M244.5 424V467M245.5 424V467M246.5 457V467M247.5 457V467M248.5 424V467M249.5 457V467M250.5 457V467M251.5 424V467M252.5 457V467M253.5 457V467M254.5 405V467M255.5 457V467M256.5 457V467M257.5 457V467M258.5 457V467M259.5 457V467M260.5 457V467M261.5 424V467M262.5 424V467M263.5 457V467M264.5 457V467M265.5 457V467M266.5 424V467M267.5 457V467M268.5 457V467M269.5 424V467M270.5 457V467M271.5 424V467M272.5 405V467M273.5 457V467M274.5 457V467M275.5 424V467M276.5 424V467M277.5 457V467M278.5 457V467M279.5 457V467M280.5 424V467M281.5 457V467M282.5 424V467M283.5 424V467M284.5 457V467M285.5 424V467M286.5 424V467M287.5 424V467M288.5 457V467M289.5 424V467M290.5 457V467M291.5 424V467M292.5 457V467M293.5 424V467M294.5 457V467M295.5 424V467M296.5 457V467M297.5 405V467M298.5 457V467M299.5 457V467M300.5 457V467M301.5 457V467M302.5 457V467M303.5 424V467M304.5 457V467M305.5 424V467M306.5 424V467M307.5 457V467M308.5 457V467M309.5 457V467M310.5 457V467M311.5 424V467M312.5 405V467M313.5 424V467M314.5 457V467M315.5 457V467M316.5 457V467M317.5 457V467M318.5 457V467M319.5 424V467M320.5 457V467M321.5 457V467M322.5 457V467M323.5 405V467M324.5 405V467M325.5 424V467M326.5 457V467M327.5 457V467M328.5 405V467M329.5 457V467M330.5 457V467M331.5 424V467M332.5 457V467M333.5 424V467M334.5 405V467M335.5 405V467M336.5 405V467M337.5 457V467M338.5 457V467M339.5 457V467M340.5 457V467M341.5 457V467M342.5 424V467M343.5 424V467M344.5 457V467M345.5 457V467M346.5 457V467M347.5 457V467M348.5 424V467M349.5 457V467M350.5 457V467M351.5 457V467M352.5 424V467M353.5 457V467M354.5 457V467M355.5 457V467M356.5 457V467M357.5 424V467M358.5 457V467M359.5 405V467M360.5 457V467M361.5 457V467M362.5 457V467M363.5 457V467M364.5 457V467M365.5 457V467M366.5 424V467M367.5 457V467M368.5 457V467M369.5 457V467M370.5 457V467M371.5 424V467M372.5 457V467M373.5 457V467M374.5 457V467M375.5 424V467M376.5 424V467M377.5 424V467M378.5 457V467M379.5 424V467M380.5 457V467M381.5 457V467M382.5 457V467M383.5 424V467M384.5 424V467M385.5 424V467M386.5 457V467M387.5 424V467M388.5 424V467M389.5 457V467M390.5 457V467M391.5 424V467M392.5 457V467M393.5 405V467M394.5 457V467M395.5 457V467M396.5 457V467M397.5 424V467M398.5 457V467M399.5 457V467M400.5 457V467M401.5 457V467M402.5 424V467M403.5 457V467M404.5 424V467M405.5 424V467M406.5 457V467M407.5 424V467M408.5 457V467M409.5 457V467M410.5 457V467M411.5 457V467M412.5 457V467M413.5 457V467M414.5 457V467M415.5 457V467M416.5 424V467M417.5 424V467M418.5 424V467M419.5 457V467M420.5 457V467M421.5 457V467M422.5 457V467M423.5 457V467M424.5 424V467M425.5 457V467M426.5 457V467M427.5 457V467M428.5 457V467M429.5 424V467M430.5 424V467M431.5 457V467M432.5 457V467M433.5 457V467M434.5 457V467M435.5 457V467M436.5 424V467M437.5 457V467M438.5 457V467M439.5 457V467M440.5 424V467M441.5 457V467M442.5 457V467M443.5 424V467M444.5 457V467M445.5 457V467M446.5 457V467M447.5 354V467M448.5 457V467M449.5 424V467M450.5 424V467M451.5 457V467M452.5 457V467M453.5 457V467M454.5 457V467M455.5 457V467M456.5 457V467M457.5 457V467M458.5 424V467M459.5 424V467M460.5 457V467M461.5 457V467M462.5 424V467M463.5 424V467M464.5 424V467M465.5 424V467M466.5 424V467M467.5 457V467M468.5 405V467M469.5 405V467M470.5 457V467M471.5 457V467M472.5 457V467M473.5 424V467M474.5 457V467M475.5 457V467M476.5 457V467M477.5 424V467M478.5 424V467M479.5 424V467M480.5 424V467M481.5 424V467M482.5 457V467M483.5 424V467M484.5 457V467M485.5 457V467M486.5 457V467M487.5 424V467M488.5 457V467M489.5 457V467M490.5 424V467M491.5 457V467M492.5 424V467M493.5 457V467M494.5 424V467M495.5 424V467M496.5 424V467M497.5 424V467M498.5 457V467M499.5 424V467M500.5 457V467M501.5 457V467M502.5 457V467M503.5 457V467M504.5 457V467M505.5 457V467M506.5 457V467M507.5 457V467M508.5 457V467M509.5 457V467M510.5 457V467M511.5 424V467M512.5 424V467M513.5 457V467M514.5 405V467M515.5 457V467M516.5 457V467M517.5 457V467M518.5 457V467M519.5 457V467M520.5 424V467M521.5 424V467M522.5 457V467M523.5 457V467M524.5 457V467M525.5 457V467M526.5 457V467M527.5 457V467M528.5 457V467M529.5 457V467M530.5 457V467M531.5 424V467M532.5 457V467M533.5 457V467M534.5 457V467M535.5 457V467M536.5 424V467M537.5 457V467M538.5 424V467M539.5 457V467M540.5 457V467M541.5 457V467M542.5 457V467M543.5 457V467M544.5 457V467M545.5 457V467M546.5 457V467M547.5 457V467M548.5 405V467M549.5 424V467M550.5 457V467M551.5 457V467M552.5 457V467M553.5 457V467M554.5 424V467M555.5 457V467M556.5 457V467M557.5 457V467M558.5 457V467M559.5 457V467M560.5 424V467M561.5 457V467M562.5 457V467M563.5 457V467M564.5 457V467M565.5 457V467M566.5 457V467M567.5 457V467M568.5 424V467M569.5 457V467M570.5 457V467M571.5 457V467M572.5 457V467M573.5 424V467M574.5 457V467M575.5 457V467M576.5 457V467M577.5 457V467M578.5 457V467M579.5 457V467M580.5 424V467M581.5 424V467M582.5 457V467M583.5 457V467M584.5 457V467M585.5 457V467M586.5 457V467M587.5 424V467M588.5 392V467M589.5 392V467M590.5 424V467M591.5 424V467M592.5 457V467M593.5 457V467M594.5 457V467M595.5 457V467M596.5 457V467M597.5 424V467M598.5 374V467M599.5 374V467M600.5 457V467M601.5 457V467M602.5 424V467M603.5 424V467M604.5 457V467M605.5 457V467M606.5 424V467M607.5 457V467M608.5 457V467M609.5 457V467M610.5 424V467M611.5 457V467M612.5 457V467M613.5 457V467M614.5 424V467M615.5 457V467M616.5 457V467M617.5 457V467M618.5 457V467M619.5 424V467M620.5 424V467M621.5 457V467M622.5 457V467M623.5 457V467M624.5 457V467M625.5 424V467M626.5 424V467M627.5 457V467M628.5 457V467M629.5 457V467M630.5 457V467M631.5 424V467M632.5 457V467M633.5 457V467M634.5 392V467M635.5 457V467M636.5 424V467M637.5 457V467M638.5 457V467M639.5 457V467M640.5 424V467M641.5 424V467M642.5 424V467M643.5 457V467M644.5 457V467M645.5 424V467M646.5 424V467M647.5 374V467M648.5 424V467M649.5 457V467M650.5 457V467M651.5 457V467" stroke="#0055FF" stroke-width="1" fill="none"/>
<path d="M166 166.5H687" stroke="#868686" stroke-width="1" stroke-dasharray="1 2"/>
<path d="M166 177.5H687" stroke="#868686" stroke-width="1" stroke-dasharray="1 2"/>
<path d="M166 190.5H687" stroke="#868686" stroke-width="1" stroke-dasharray="1 2"/>
<path d="M166 209.5H687" stroke="#868686" stroke-width="1" stroke-dasharray="1 2"/>
<path d="M166 241.5H687" stroke="#868686" stroke-width="1" stroke-dasharray="1 2"/>
<path d="M166 274.5H687" stroke="#868686" stroke-width="1" stroke-dasharray="1 2"/>
<path d="M166 284.5H687" stroke="#868686" stroke-width="1" stroke-dasharray="1 2"/>
<path d="M166 298.5H687" stroke="#868686" stroke-width="1" stroke-dasharray="1 2"/>
<path d="M166 317.5H687" stroke="#868686" stroke-width="1" stroke-dasharray="1 2"/>
<path d="M166 349.5H687" stroke="#868686" stroke-width="1" stroke-dasharray="1 2"/>
<path d="M166 381.5H687" stroke="#868686" stroke-width="1" stroke-dasharray="1 2"/>
<path d="M166 405.5H687" stroke="#868686" stroke-width="1" stroke-dasharray="1 2"/>
<path d="M166 424.5H687" stroke="#868686" stroke-width="1" stroke-dasharray="1 2"/>
<path d="M166 457.5H687" stroke="#868686" stroke-width="1" stroke-dasharray="1 2"/>
<path d="M166 193.5H687" stroke="#FF0000" stroke-width="1" stroke-dasharray="1 2"/>
<path d="M166 392.5H687" stroke="#FF0000" stroke-width="1" stroke-dasharray="1 2"/>
<path d="M217.5 121V467" stroke="#868686" stroke-width="1" stroke-dasharray="1 2"/>
<path d="M269.5 121V467" stroke="#868686" stroke-width="1" stroke-dasharray="1 2"/>
<path d="M321.5 121V467" stroke="#868686" stroke-width="1" stroke-dasharray="1 2"/>
<path d="M374.5 121V467" stroke="#868686" stroke-width="1" stroke-dasharray="1 2"/>
<path d="M426.5 121V467" stroke="#868686" stroke-width="1" stroke-dasharray="1 2"/>
<path d="M478.5 121V467" stroke="#868686" stroke-width="1" stroke-dasharray="1 2"/>
<path d="M531.5 121V467" stroke="#868686" stroke-width="1" stroke-dasharray="1 2"/>
<path d="M583.5 121V467" stroke="#868686" stroke-width="1" stroke-dasharray="1 2"/>
<path d="M635.5 121V467" stroke="#868686" stroke-width="1" stroke-dasharray="1 2"/>
<path d="M652.5 121V467" stroke="#000" stroke-width="1" stroke-dasharray="1 2"/>
<polyline points="166 426.44 167 426.24 168 426.04 169 425.84 170 425.65 171 425.45 172 425.26 173 425.07 174 424.88 175 424.68 176 424.49 177 424.30 178 424.12 179 423.93 180 423.74 181 423.56 182 423.37 183 423.19 184 423.00 185 422.82 186 422.64 187 422.45 188 422.27 189 422.09 190 421.91 191 421.73 192 421.56 193 421.38 194 421.20 195 421.03 196 420.85 197 420.68 198 420.50 199 420.33 200 420.16 201 419.98 202 419.81 203 419.64 204 419.47 205 419.30 206 419.13 207 418.96 208 418.80 209 418.63 210 418.46 211 418.29 212 418.13 213 417.96 214 417.80 215 417.64 216 417.47 217 417.31 218 417.15 219 416.98 220 416.82 221 416.66 222 416.50 223 416.34 224 416.18 225 416.02 226 415.86 227 415.71 228 415.55 229 415.39 230 415.24 231 415.08 232 414.92 233 414.77 234 414.61 235 414.46 236 414.31 237 414.15 238 414.00 239 413.85 240 413.69 241 413.54 242 413.39 243 413.24 244 413.09 245 412.94 246 412.79 247 412.64 248 412.49 249 412.34 250 412.20 251 412.05 252 411.90 253 411.76 254 411.61 255 411.46 256 411.32 257 411.17 258 411.03 259 410.88 260 410.74 261 410.59 262 410.45 263 410.31 264 410.17 265 410.02 266 409.88 267 409.74 268 409.60 269 409.46 270 409.32 271 409.18 272 409.04 273 408.90 274 408.76 275 408.62 276 408.48 277 408.34 278 408.20 279 408.07 280 407.93 281 407.79 282 407.65 283 407.52 284 407.38 285 407.25 286 407.11 287 406.97 288 406.84 289 406.71 290 406.57 291 406.44 292 406.30 293 406.17 294 406.04 295 405.90 296 405.77 297 405.64 298 405.51 299 405.38 300 405.24 301 405.11 302 404.98 303 404.85 304 404.72 305 404.59 306 404.46 307 404.33 308 404.20 309 404.07 310 403.94 311 403.82 312 403.69 313 403.56 314 403.43 315 403.30 316 403.18 317 403.05 318 402.92 319 402.80 320 402.67 321 402.54 322 402.42 323 402.29 324 402.17 325 402.04 326 401.92 327 401.79 328 401.67 329 401.54 330 401.42 331 401.30 332 401.17 333 401.05 334 400.93 335 400.81 336 400.68 337 400.56 338 400.44 339 400.32 340 400.20 341 400.07 342 399.95 343 399.83 344 399.71 345 399.59 346 399.47 347 399.35 348 399.23 349 399.11 350 398.99 351 398.87 352 398.75 353 398.63 354 398.51 355 398.40 356 398.28 357 398.16 358 398.04 359 397.92 360 397.81 361 397.69 362 397.57 363 397.46 364 397.34 365 397.22 366 397.11 367 396.99 368 396.87 369 396.76 370 396.64 371 396.53 372 396.41 373 396.30 374 396.18 375 396.07 376 395.95 377 395.84 378 395.73 379 395.61 380 395.50 381 395.38 382 395.27 383 395.16 384 395.05 385 394.93 386 394.82 387 394.71 388 394.60 389 394.48 390 394.37 391 394.26 392 394.15 393 394.04 394 393.93 395 393.81 396 393.70 397 393.59 398 393.48 399 393.37 400 393.26 401 393.15 402 393.04 403 392.93 404 392.82 405 392.71 406 392.60 407 392.49 408 392.38 409 392.28 410 392.17 411 392.06 412 391.95 413 391.84 414 391.73 415 391.63 416 391.52 417 391.41 418 391.30 419 391.20 420 391.09 421 390.98 422 390.88 423 390.77 424 390.66 425 390.56 426 390.45 427 390.34 428 390.24 429 390.13 430 390.03 431 389.92 432 389.82 433 389.71 434 389.60 435 389.50 436 389.40 437 389.29 438 389.19 439 389.08 440 388.98 441 388.87 442 388.77 443 388.67 444 388.56 445 388.46 446 388.35 447 388.25 448 388.15 449 388.05 450 387.94 451 387.84 452 387.74 453 387.63 454 387.53 455 387.43 456 387.33 457 387.23 458 387.12 459 387.02 460 386.92 461 386.82 462 386.72 463 386.62 464 386.52 465 386.41 466 386.31 467 386.21 468 386.11 469 386.01 470 385.91 471 385.81 472 385.71 473 385.61 474 385.51 475 385.41 476 385.31 477 385.21 478 385.11 479 385.01 480 384.91 481 384.82 482 384.72 483 384.62 484 384.52 485 384.42 486 384.32 487 384.22 488 384.13 489 384.03 490 383.93 491 383.83 492 383.73 493 383.64 494 383.54 495 383.44 496 383.34 497 383.25 498 383.15 499 383.05 500 382.96 501 382.86 502 382.76 503 382.67 504 382.57 505 382.47 506 382.38 507 382.28 508 382.19 509 382.09 510 381.99 511 381.90 512 381.80 513 381.71 514 381.61 515 381.52 516 381.42 517 381.33 518 381.23 519 381.14 520 381.04 521 380.95 522 380.85 523 380.76 524 380.66 525 380.57 526 380.48 527 380.38 528 380.29 529 380.19 530 380.10 531 380.01 532 379.91 533 379.82 534 379.73 535 379.63 536 379.54 537 379.45 538 379.36 539 379.26 540 379.17 541 379.08 542 378.98 543 378.89 544 378.80 545 378.71 546 378.62 547 378.52 548 378.43 549 378.34 550 378.25 551 378.16 552 378.06 553 377.97 554 377.88 555 377.79 556 377.70 557 377.61 558 377.52 559 377.43 560 377.34 561 377.24 562 377.15 563 377.06 564 376.97 565 376.88 566 376.79 567 376.70 568 376.61 569 376.52 570 376.43 571 376.34 572 376.25 573 376.16 574 376.07 575 375.98 576 375.89 577 375.81 578 375.72 579 375.63 580 375.54 581 375.45 582 375.36 583 375.27 584 375.18 585 375.09 586 375.01 587 374.92 588 374.83 589 374.74 590 374.65 591 374.56 592 374.48 593 374.39 594 374.30 595 374.21 596 374.13 597 374.04 598 373.95 599 373.86 600 373.78 601 373.69 602 373.60 603 373.51 604 373.43 605 373.34 606 373.25 607 373.17 608 373.08 609 372.99 610 372.91 611 372.82 612 372.73 613 372.65 614 372.56 615 372.47 616 372.39 617 372.30 618 372.22 619 372.13 620 372.04 621 371.96 622 371.87 623 371.79 624 371.70 625 371.62 626 371.53 627 371.45 628 371.36 629 371.28 630 371.19 631 371.11 632 371.02 633 370.94 634 370.85 635 370.77 636 370.68 637 370.60 638 370.51 639 370.43 640 370.35 641 370.26 642 370.18 643 370.09 644 370.01 645 369.92 646 369.84 647 369.76 648 369.67 649 369.59 650 369.51 651 369.42 652 369.34" fill="none" stroke="#000" stroke-width="2.2" shape-rendering="auto"/>
<g shape-rendering="auto">
<text x="162.3" y="171.0" font-size="11" text-anchor="end" fill="#000" textLength="17.0" lengthAdjust="spacingAndGlyphs">500</text>
<text x="162.3" y="182.0" font-size="11" text-anchor="end" fill="#000" textLength="17.0" lengthAdjust="spacingAndGlyphs">400</text>
<text x="162.3" y="195.0" font-size="11" text-anchor="end" fill="#000" textLength="17.0" lengthAdjust="spacingAndGlyphs">300</text>
<text x="162.3" y="214.0" font-size="11" text-anchor="end" fill="#000" textLength="17.0" lengthAdjust="spacingAndGlyphs">200</text>
<text x="162.3" y="246.0" font-size="11" text-anchor="end" fill="#000" textLength="17.0" lengthAdjust="spacingAndGlyphs">100</text>
<text x="162.3" y="279.0" font-size="11" text-anchor="end" fill="#000" textLength="11.4" lengthAdjust="spacingAndGlyphs">50</text>
<text x="162.3" y="289.0" font-size="11" text-anchor="end" fill="#000" textLength="11.4" lengthAdjust="spacingAndGlyphs">40</text>
<text x="162.3" y="303.0" font-size="11" text-anchor="end" fill="#000" textLength="11.4" lengthAdjust="spacingAndGlyphs">30</text>
<text x="162.3" y="322.0" font-size="11" text-anchor="end" fill="#000" textLength="11.4" lengthAdjust="spacingAndGlyphs">20</text>
<text x="162.3" y="354.0" font-size="11" text-anchor="end" fill="#000" textLength="11.4" lengthAdjust="spacingAndGlyphs">10</text>
<text x="162.3" y="386.0" font-size="11" text-anchor="end" fill="#000">5</text>
<text x="162.3" y="397.0" font-size="11" text-anchor="end" fill="#000">4</text>
<text x="162.3" y="410.0" font-size="11" text-anchor="end" fill="#000">3</text>
<text x="162.3" y="429.0" font-size="11" text-anchor="end" fill="#000">2</text>
<text x="162.3" y="462.0" font-size="11" text-anchor="end" fill="#000">1</text>
<text x="690.4" y="424.56" font-size="11" text-anchor="start" fill="#000">2</text>
<text x="690.4" y="378.42" font-size="11" text-anchor="start" fill="#000">4</text>
<text x="690.4" y="332.28" font-size="11" text-anchor="start" fill="#000">6</text>
<text x="690.4" y="286.14" font-size="11" text-anchor="start" fill="#000">8</text>
<text x="690.4" y="240.0" font-size="11" text-anchor="start" fill="#000" textLength="11.4" lengthAdjust="spacingAndGlyphs">10</text>
<text x="690.4" y="193.85999999999996" font-size="11" text-anchor="start" fill="#000" textLength="11.4" lengthAdjust="spacingAndGlyphs">12</text>
<text x="690.4" y="147.71999999999997" font-size="11" text-anchor="start" fill="#000" textLength="11.4" lengthAdjust="spacingAndGlyphs">14</text>
<text x="268.8" y="482" font-size="11" text-anchor="middle" fill="#000" textLength="21.4" lengthAdjust="spacingAndGlyphs">5 GB</text>
<text x="373.4" y="482" font-size="11" text-anchor="middle" fill="#000" textLength="26.8" lengthAdjust="spacingAndGlyphs">10 GB</text>
<text x="477.99999999999994" y="482" font-size="11" text-anchor="middle" fill="#000" textLength="26.8" lengthAdjust="spacingAndGlyphs">15 GB</text>
<text x="582.6" y="482" font-size="11" text-anchor="middle" fill="#000" textLength="26.8" lengthAdjust="spacingAndGlyphs">20 GB</text>
</g>
<rect x="1" y="492" width="733" height="1" fill="#FFFFFF"/>
<rect x="1" y="513" width="733" height="3" fill="#FFFFFF" clip-path="url(#client)" shape-rendering="auto"/>
<rect x="3" y="493" width="175" height="1" fill="#A0A0A0"/>
<rect x="3" y="493" width="1" height="20" fill="#A0A0A0"/>
<rect x="177" y="493" width="1" height="21" fill="#FFFFFF"/>
<rect x="2" y="493" width="1" height="1" fill="#A0A0A0"/>
<rect x="3" y="494" width="138" height="1" fill="#A0A0A0"/>
<rect x="141" y="494" width="1" height="19" fill="#FFFFFF"/>
<rect x="180" y="493" width="178" height="1" fill="#A0A0A0"/>
<rect x="180" y="493" width="1" height="20" fill="#A0A0A0"/>
<rect x="357" y="493" width="1" height="21" fill="#FFFFFF"/>
<rect x="360" y="493" width="177" height="1" fill="#A0A0A0"/>
<rect x="360" y="493" width="1" height="20" fill="#A0A0A0"/>
<rect x="536" y="493" width="1" height="21" fill="#FFFFFF"/>
<rect x="539" y="493" width="177" height="1" fill="#A0A0A0"/>
<rect x="539" y="493" width="1" height="20" fill="#A0A0A0"/>
<rect x="715" y="493" width="1" height="21" fill="#FFFFFF"/>
<g shape-rendering="auto">
<text x="362.6" y="509" font-size="12" text-anchor="start" fill="#000" textLength="140.5" lengthAdjust="spacingAndGlyphs">Finalized BD-R (Sequential)</text>
<text x="541.7" y="509" font-size="12" text-anchor="start" fill="#000" textLength="92.0" lengthAdjust="spacingAndGlyphs">MILLEN-MR1/000</text>
<path d="M721 515.5L733.8 502.7M725.3 515.5L733.8 507" stroke="#FFFFFF" stroke-width="1.3"/>
<path d="M722.4 515.6L733.8 504.2M726.7 515.6L733.8 508.5M731 515.6L733.8 512.8" stroke="#A0A0A0" stroke-width="1.3"/>
</g>
<rect x="0.5" y="0.5" width="734" height="516" rx="7.5" ry="7.5" fill="none" stroke="#0078D7" stroke-width="1" shape-rendering="auto"/>
</svg>
</body></html>
